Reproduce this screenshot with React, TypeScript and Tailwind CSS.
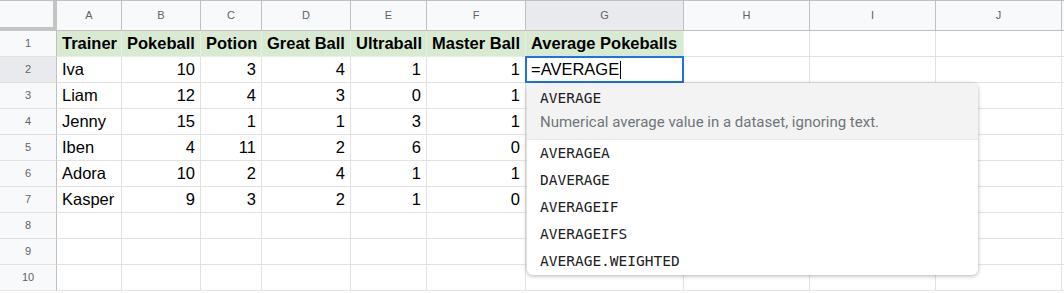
import React from "react";

const COLS = ["A", "B", "C", "D", "E", "F", "G", "H", "I", "J", ""];

const HEAD = ["Trainer", "Pokeball", "Potion", "Great Ball", "Ultraball", "Master Ball", "Average Pokeballs"];

const DATA: [string, number, number, number, number, number][] = [
  ["Iva", 10, 3, 4, 1, 1],
  ["Liam", 12, 4, 3, 0, 1],
  ["Jenny", 15, 1, 1, 3, 1],
  ["Iben", 4, 11, 2, 6, 0],
  ["Adora", 10, 2, 4, 1, 1],
  ["Kasper", 9, 3, 2, 1, 0],
];

const SUGGESTIONS = ["AVERAGEA", "DAVERAGE", "AVERAGEIF", "AVERAGEIFS", "AVERAGE.WEIGHTED"];

const cell = "h-[26px] border-r border-b border-[#e2e2e2] px-[5px] flex items-center whitespace-nowrap overflow-hidden";

const RowHead = ({ n, active }: { n: number; active?: boolean }) => (
  <div
    className={`h-[26px] border-r border-b border-r-[#c0c0c0] border-b-[#e2e2e2] flex items-center justify-center text-[11px] text-[#5f6368] ${
      active ? "bg-[#e8eaed]" : "bg-[#f8f9fa]"
    }`}
  >
    {n}
  </div>
);

const App = () => {
  return (
    <div className="relative h-[293px] w-[1064px] overflow-hidden bg-white font-['Liberation_Sans',Arial,sans-serif] text-[16.5px] text-black">
      <div className="grid grid-cols-[57px_65px_79px_61px_89px_76px_99px_158px_126px_126px_126px_1fr] border-t border-[#c0c0c0]">
        {/* column letters */}
        <div className="h-[30px] bg-[#f8f9fa] border-r-4 border-b-4 border-[#c4c4c4]" />
        {COLS.map((c, i) => (
          <div
            key={i}
            className={`h-[30px] border-r border-b border-[#c0c0c0] flex items-center justify-center text-[11px] text-[#5f6368] ${
              c === "G" ? "bg-[#e8eaed]" : "bg-[#f8f9fa]"
            }`}
          >
            {c}
          </div>
        ))}

        {/* row 1 */}
        <RowHead n={1} />
        {HEAD.map((h, i) => (
          <div key={i} className={`${cell} bg-[#d9ead3] border-[#e6efe3] font-bold`}>
            {h}
          </div>
        ))}
        {[0, 1, 2, 3].map((i) => (
          <div key={i} className={cell} />
        ))}

        {/* data rows */}
        {DATA.map((r, ri) => (
          <React.Fragment key={ri}>
            <RowHead n={ri + 2} active={ri === 0} />
            <div className={cell}>{r[0]}</div>
            {r.slice(1).map((v, i) => (
              <div key={i} className={`${cell} justify-end`}>
                {v}
              </div>
            ))}
            {ri === 0 ? (
              <div className={`${cell} relative overflow-visible`}>
                <div className="absolute -inset-[1px] border-2 border-[#1a73e8]" />
                <span>=AVERAGE</span>
                <span className="ml-[1px] inline-block h-[18px] w-[1px] bg-black" />
              </div>
            ) : (
              <div className={cell} />
            )}
            {[0, 1, 2, 3].map((i) => (
              <div key={i} className={cell} />
            ))}
          </React.Fragment>
        ))}

        {/* empty rows */}
        {[8, 9, 10].map((n) => (
          <React.Fragment key={n}>
            <RowHead n={n} />
            {[0, 1, 2, 3, 4, 5, 6, 7, 8, 9, 10].map((i) => (
              <div key={i} className={cell} />
            ))}
          </React.Fragment>
        ))}
      </div>

      {/* autocomplete dropdown */}
      <div className="absolute left-[527px] top-[83px] w-[451px] overflow-hidden rounded-[6px] bg-white shadow-[0_1px_4px_rgba(0,0,0,0.3)]">
        <div className="bg-[#f3f3f3] pl-[13px] pt-[3px] pb-[5px] border-b border-[#e6e6e6]">
          <div className="h-[24px] leading-[24px] font-['DejaVu_Sans_Mono',monospace] text-[14.5px] text-[#202124]">AVERAGE</div>
          <div className="h-[24px] leading-[24px] font-['Roboto',Arial,sans-serif] text-[15px] text-[#70757a]">
            Numerical average value in a dataset, ignoring text.
          </div>
        </div>
        {SUGGESTIONS.map((s) => (
          <div
            key={s}
            className="h-[27px] leading-[27px] pl-[13px] font-['DejaVu_Sans_Mono',monospace] text-[14.5px] text-[#202124]"
          >
            {s}
          </div>
        ))}
      </div>
    </div>
  );
};

export default App;
